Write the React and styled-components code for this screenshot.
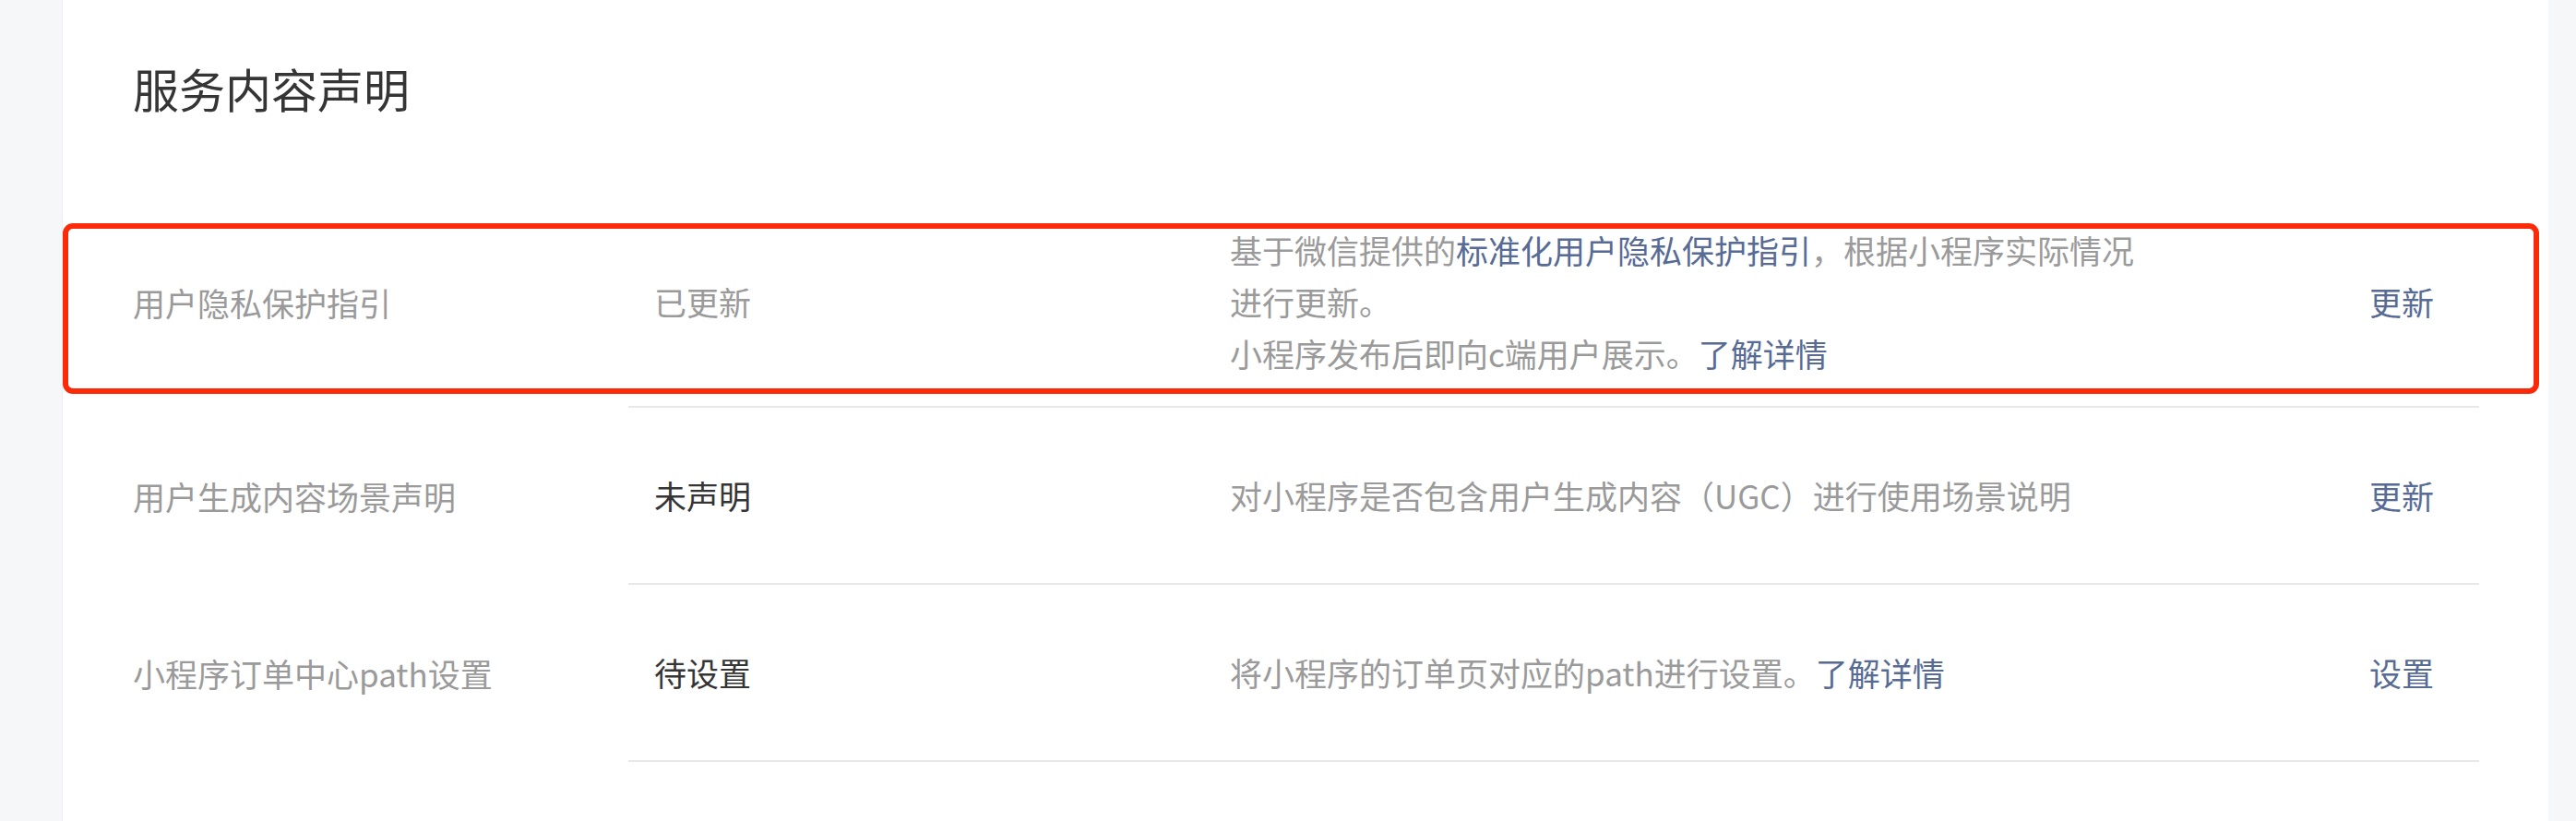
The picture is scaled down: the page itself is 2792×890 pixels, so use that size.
import React from "react";
import styled, { createGlobalStyle } from "styled-components";

const GlobalStyle = createGlobalStyle`
  html, body {
    margin: 0;
    padding: 0;
    background: #f6f7f9;
  }
  body {
    font-family: "Noto Sans CJK SC", "Liberation Sans", sans-serif;
  }
`;

const Page = styled.div`
  display: flex;
  height: 890px;
  overflow: hidden;
  padding: 0 30px 0 67px;
  box-sizing: border-box;
`;

const Card = styled.div`
  flex: 1;
  background: #fff;
  border-left: 1px solid #eceef1;
  padding: 60px 75px 0 76px;
  box-sizing: border-box;
`;

const Title = styled.h2`
  margin: 0 0 84px;
  font-size: 50px;
  line-height: 70px;
  font-weight: 400;
  color: #353535;
`;

const Row = styled.div`
  position: relative;
  display: flex;
  font-size: 35px;
  line-height: 56px;

  ${(p) =>
    p.$highlighted &&
    `
    &::after {
      content: "";
      position: absolute;
      top: 28px;
      bottom: 15px;
      left: -76px;
      right: -65px;
      border: 6px solid #fb2a08;
      border-radius: 11px;
      pointer-events: none;
    }
  `}
`;

const Label = styled.div`
  width: 537px;
  flex-shrink: 0;
  display: flex;
  align-items: center;
  color: #9a9a9a;
`;

const Content = styled.div`
  flex: 1;
  display: grid;
  grid-template-columns: 624px 1fr auto;
  align-items: center;
  min-height: 192px;
  box-sizing: border-box;
  padding: 29px 49px 29px 28px;
  border-bottom: 2px solid #e8e8ec;
`;

const Status = styled.div`
  color: ${(p) => (p.$muted ? "#9a9a9a" : "#353535")};
`;

const Desc = styled.div`
  max-width: 990px;
  color: #9a9a9a;
`;

const Link = styled.a`
  color: #576b95;
  text-decoration: none;
`;

const Action = styled.a`
  color: #576b95;
  text-decoration: none;
`;

const rows = [
  {
    label: "用户隐私保护指引",
    status: "已更新",
    muted: true,
    highlighted: true,
    desc: (
      <>
        基于微信提供的<Link href="#">标准化用户隐私保护指引</Link>，根据小程序实际情况进行更新。
        <br />
        小程序发布后即向c端用户展示。<Link href="#">了解详情</Link>
      </>
    ),
    action: "更新",
  },
  {
    label: "用户生成内容场景声明",
    status: "未声明",
    desc: <>对小程序是否包含用户生成内容（UGC）进行使用场景说明</>,
    action: "更新",
  },
  {
    label: "小程序订单中心path设置",
    status: "待设置",
    desc: (
      <>
        将小程序的订单页对应的path进行设置。<Link href="#">了解详情</Link>
      </>
    ),
    action: "设置",
  },
];

export default function App() {
  return (
    <Page>
      <GlobalStyle />
      <Card>
        <Title>服务内容声明</Title>
        {rows.map((r) => (
          <Row key={r.label} $highlighted={r.highlighted}>
            <Label>{r.label}</Label>
            <Content>
              <Status $muted={r.muted}>{r.status}</Status>
              <Desc>{r.desc}</Desc>
              <Action href="#">{r.action}</Action>
            </Content>
          </Row>
        ))}
      </Card>
    </Page>
  );
}
